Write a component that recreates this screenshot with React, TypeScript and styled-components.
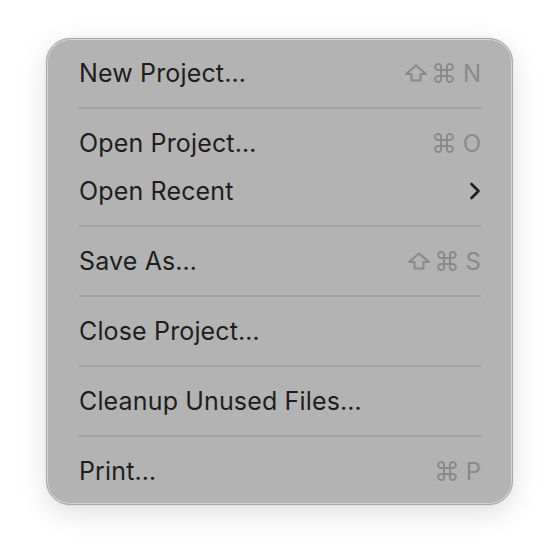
import React from 'react'
import styled, { createGlobalStyle } from 'styled-components'

const Global = createGlobalStyle`
  html, body { margin: 0; padding: 0; background: #ffffff; }
  body { font-family: Inter, "Noto Sans", sans-serif; -webkit-font-smoothing: antialiased; }
`

const Page = styled.div`
  width: 560px;
  height: 558px;
  padding: 38px 0 0 46px;
  box-sizing: border-box;
`

const Menu = styled.div`
  width: 467px;
  box-sizing: border-box;
  padding: 10px 31px 9px 32px;
  background: #b3b3b3;
  border-radius: 24px;
  border: 1px solid #a9a9a9;
  box-shadow: inset 0 0 0 1px rgba(255, 255, 255, 0.45), 0 8px 28px rgba(0, 0, 0, 0.13), 0 0 3px rgba(0, 0, 0, 0.08);
  display: flex;
  flex-direction: column;
`

const Row = styled.div`
  height: 48px;
  display: flex;
  align-items: center;
  justify-content: space-between;
`

const Label = styled.span`
  font-size: 25px;
  color: #1e1e1e;
  letter-spacing: 0.15px;
`

const Shortcut = styled.span`
  display: flex;
  align-items: center;
  gap: 6px;
  font-size: 24px;
  color: #8a8a8a;
`

const Key = styled.span`
  margin-left: 3px;
  font-family: Inter, "Noto Sans", sans-serif;
`

const Separator = styled.div`
  height: 22px;
  display: flex;
  align-items: center;
  &::after {
    content: '';
    flex: 1;
    height: 2px;
    background: #a0a0a0;
  }
`

const ShiftIcon = () => (
  <svg width="24" height="20" viewBox="0 0 24 20" fill="none">
    <path d="M12 2.5 L22 11 H16.5 V17.5 H7.5 V11 H2 Z" stroke="#8a8a8a" strokeWidth="2.1" strokeLinejoin="round" />
  </svg>
)

const CmdIcon = () => (
  <svg width="20" height="20" viewBox="0 0 20 20" fill="none">
    <path
      d="M7 7 H13 V13 H7 Z M7 7 V5 A3 3 0 1 0 4 7 H7 M13 7 V5 A3 3 0 1 1 16 7 H13 M7 13 V15 A3 3 0 1 1 4 13 H7 M13 13 V15 A3 3 0 1 0 16 13 H13"
      stroke="#8a8a8a"
      strokeWidth="2"
      strokeLinejoin="round"
    />
  </svg>
)

const Chevron = () => (
  <svg width="12" height="18" viewBox="0 0 12 18" fill="none">
    <path d="M2.5 2 L9.5 9 L2.5 16" stroke="#1e1e1e" strokeWidth="2.6" strokeLinecap="round" strokeLinejoin="round" />
  </svg>
)

type Item = { label: string; shift?: boolean; key?: string; submenu?: boolean } | 'sep'

const items: Item[] = [
  { label: 'New Project…', shift: true, key: 'N' },
  'sep',
  { label: 'Open Project…', key: 'O' },
  { label: 'Open Recent', submenu: true },
  'sep',
  { label: 'Save As…', shift: true, key: 'S' },
  'sep',
  { label: 'Close Project…' },
  'sep',
  { label: 'Cleanup Unused Files…' },
  'sep',
  { label: 'Print…', key: 'P' },
]

export default function App() {
  return (
    <Page>
      <Global />
      <Menu>
        {items.map((item, i) =>
          item === 'sep' ? (
            <Separator key={i} />
          ) : (
            <Row key={i}>
              <Label>{item.label}</Label>
              {item.submenu ? (
                <Chevron />
              ) : item.key ? (
                <Shortcut>
                  {item.shift && <ShiftIcon />}
                  <CmdIcon />
                  <Key>{item.key}</Key>
                </Shortcut>
              ) : null}
            </Row>
          )
        )}
      </Menu>
    </Page>
  )
}
